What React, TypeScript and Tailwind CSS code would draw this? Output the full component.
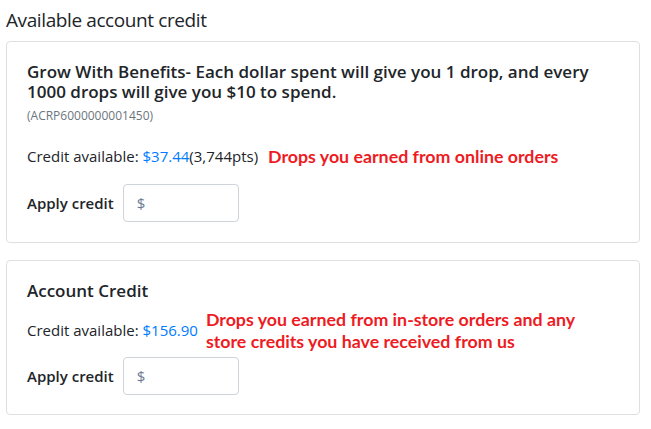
export default function App() {
  return (
    <div className="w-[651px] h-[429px] bg-white px-[6px] text-[#212529] font-['Open_Sans',sans-serif] overflow-hidden">
      <h2 className="pt-[6px] text-[19px] tracking-[-0.4px] leading-[28px] mb-[7px]">Available account credit</h2>

      <div className="w-[634px] border border-[#dfdfdf] rounded-[4px] px-[20px] pt-[20px] pb-[20px]">
        <h3 className="text-[17px] leading-[20px] font-semibold">
          Grow With Benefits- Each dollar spent will give you 1 drop, and every 1000 drops will give you $10 to spend.
        </h3>
        <p className="text-[12px] text-[#6c757d] mt-[5px]">(ACRP6000000001450)</p>
        <div className="flex items-center mt-[20px] text-[15px] h-[22px]">
          <span>
            Credit available: <span className="text-[#007bff]">$37.44</span>(3,744pts)
          </span>
          <span className="ml-[10px] text-[#ed1c24] font-bold font-['Lato',sans-serif] text-[17.8px]">
            Drops you earned from online orders
          </span>
        </div>
        <div className="flex items-center mt-[17px]">
          <label className="text-[15px] font-semibold mr-[9px]">Apply credit</label>
          <div className="w-[116px] h-[38px] border border-[#ced4da] rounded-[4px] flex items-center px-[13px] text-[15px] text-[#6c7a92]">
            $
          </div>
        </div>
      </div>

      <div className="w-[634px] mt-[17px] border border-[#dfdfdf] rounded-[4px] px-[20px] pt-[20px] pb-[19px]">
        <h3 className="text-[17px] leading-[20px] font-semibold">Account Credit</h3>
        <div className="flex items-center mt-[7px]">
          <span className="text-[15px] whitespace-nowrap">
            Credit available: <span className="text-[#007bff]">$156.90</span>
          </span>
          <span className="ml-[8px] w-[380px] text-[#ed1c24] font-bold font-['Lato',sans-serif] text-[17.8px] leading-[22px]">
            Drops you earned from in-store orders and any store credits you have received from us
          </span>
        </div>
        <div className="flex items-center mt-[5px]">
          <label className="text-[15px] font-semibold mr-[9px]">Apply credit</label>
          <div className="w-[116px] h-[38px] border border-[#ced4da] rounded-[4px] flex items-center px-[13px] text-[15px] text-[#6c7a92]">
            $
          </div>
        </div>
      </div>
    </div>
  );
}
